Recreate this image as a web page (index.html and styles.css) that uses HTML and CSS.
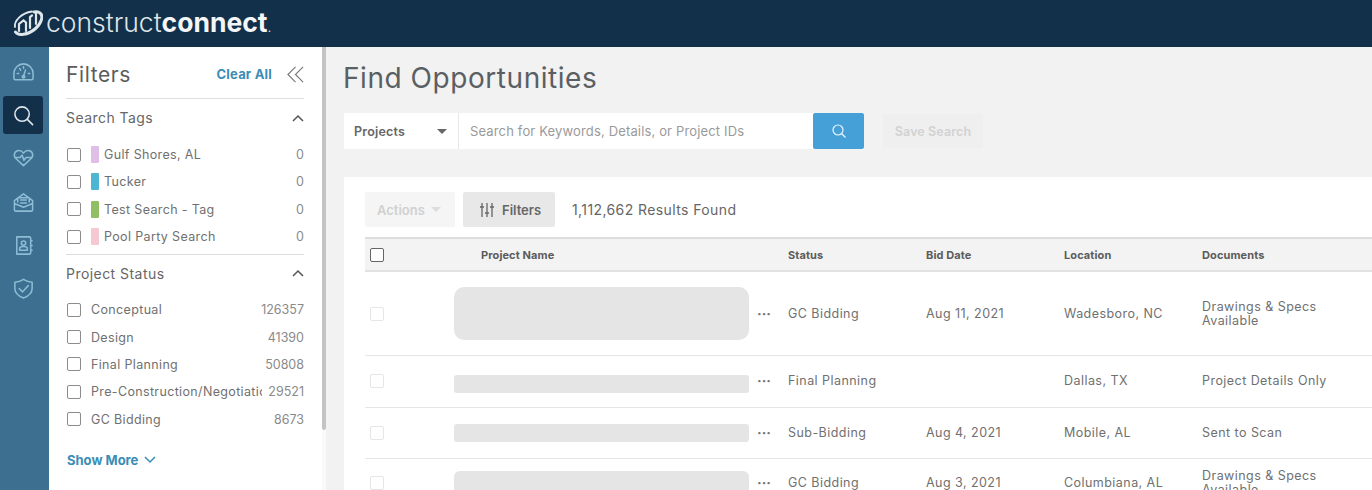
FILE: index.html
```html
<!DOCTYPE html>
<html>
<head>
    <title>Find Opportunities</title>
    <link rel="stylesheet" href="styles.css">
</head>
<body>
    <header class="topbar">
        <svg class="logo-mark" viewBox="0 0 30 26" width="30" height="26" fill="none" stroke="#dfe6ea" stroke-linecap="round">
            <path stroke-width="1.800" d="M2 17 C1 11 8 3 19 1.500" />
            <path stroke-width="3" d="M2.500 22 C5 26 15 25 22 19 C28 14 31 6 27 3 C25.500 1.500 23 1.500 21 2" />
            <path stroke-width="2.200" d="M6 21 V14 L10.500 10.500 L13 12.500 V21" />
            <path stroke-width="2.200" d="M17 18 V7 L19 5.500" />
            <path stroke-width="2.200" d="M23 14 V2" />
        </svg>
        <span class="logo-text">construct<b>connect</b><i>.</i></span>
    </header>
    <div class="body-wrap">
        <nav class="rail">
            <a class="rail-item">
                <svg viewBox="0 0 24 24" width="23" height="23"><path d="M2 18 V13 a10 10 0 0 1 20 0 V18 a1.500 1.500 0 0 1 -1.500 1.500 H3.500 A1.500 1.500 0 0 1 2 18 Z M12 16 L14 9.500 M5.500 13 H7 M17 13 H18.500 M8 8 L9 9.500 M12 6 V7.500" /><circle cx="12" cy="16.500" r="1.300" /></svg>
            </a>
            <a class="rail-item rail-active">
                <svg class="rail-search" viewBox="0 0 24 24" width="23" height="23"><circle cx="10.500" cy="10.500" r="7.500" /><path d="M16 16 L21.500 21.500" /></svg>
            </a>
            <a class="rail-item rail-heart">
                <svg viewBox="0 0 24 24" width="23" height="23"><path d="M12 20.500 L4 13 C1 10 2.500 5 7 4.800 C9.500 4.700 11 6 12 7.500 C13 6 14.500 4.700 17 4.800 C21.500 5 23 10 20 13 Z M3 12 H8.500 L10.500 9.500 L12.500 15 L14.500 12 H21" /></svg>
            </a>
            <a class="rail-item">
                <svg viewBox="0 0 24 24" width="23" height="23"><path d="M2.500 10 L12 3 L21.500 10 V19.500 a1.500 1.500 0 0 1 -1.500 1.500 H4 a1.500 1.500 0 0 1 -1.500 -1.500 Z M2.500 13 L12 17 L21.500 13 M6 11.500 V7 H18 V11.500 M9 9.500 H15 M9 12.500 H15" /></svg>
            </a>
            <a class="rail-item">
                <svg viewBox="0 0 24 24" width="23" height="23"><path d="M5 3 H18 a1.500 1.500 0 0 1 1.500 1.500 V19.500 A1.500 1.500 0 0 1 18 21 H5 Z M19.500 7 H21 M19.500 12 H21 M19.500 17 H21 M8 17 V15 C8 13.500 9.500 13 12 13 C14.500 13 16 13.500 16 15 V17 Z" /><circle cx="12" cy="9.500" r="2.300" /></svg>
            </a>
            <a class="rail-item">
                <svg viewBox="0 0 24 24" width="23" height="23"><path d="M12 2.500 C15 4.500 17.500 5.300 21 5.500 V12 C21 16.500 17 20 12 22 C7 20 3 16.500 3 12 V5.500 C6.500 5.300 9 4.500 12 2.500 Z M7.500 12 L11 15.500 L17 9" /></svg>
            </a>
        </nav>
        <aside class="filters">
            <div class="filters-head">
                <h2>Filters</h2>
                <a class="clear-all">Clear All</a>
                <svg class="collapse" viewBox="0 0 18 18" width="17" height="17"><path d="M9 1 L1 9 L9 17 M17 1 L9 9 L17 17" /></svg>
            </div>
            <div class="section-head">
                <h3>Search Tags</h3>
                <svg class="chev" viewBox="0 0 12 8" width="12" height="8"><path d="M1 7 L6 2 L11 7" /></svg>
            </div>
            <ul class="filter-list">
                <li><span class="box"></span><span class="swatch swatch-lilac"></span><span class="name">Gulf Shores, AL</span><span class="count">0</span></li>
                <li><span class="box"></span><span class="swatch swatch-cyan"></span><span class="name">Tucker</span><span class="count">0</span></li>
                <li><span class="box"></span><span class="swatch swatch-green"></span><span class="name">Test Search - Tag</span><span class="count">0</span></li>
                <li><span class="box"></span><span class="swatch swatch-pink"></span><span class="name">Pool Party Search</span><span class="count">0</span></li>
            </ul>
            <div class="section-head section-rule">
                <h3>Project Status</h3>
                <svg class="chev" viewBox="0 0 12 8" width="12" height="8"><path d="M1 7 L6 2 L11 7" /></svg>
            </div>
            <ul class="filter-list">
                <li><span class="box"></span><span class="name">Conceptual</span><span class="count">126357</span></li>
                <li><span class="box"></span><span class="name">Design</span><span class="count">41390</span></li>
                <li><span class="box"></span><span class="name">Final Planning</span><span class="count">50808</span></li>
                <li><span class="box"></span><span class="name">Pre-Construction/Negotiation</span><span class="count">29521</span></li>
                <li><span class="box"></span><span class="name">GC Bidding</span><span class="count">8673</span></li>
            </ul>
            <a class="show-more">Show More
                <svg viewBox="0 0 12 8" width="12" height="8"><path d="M1 1 L6 6 L11 1" /></svg>
            </a>
        </aside>
        <div class="scrollbar"><div class="scroll-thumb"></div></div>
        <main class="main">
            <h1>Find Opportunities</h1>
            <div class="search-row">
                <div class="search-bar">
                    <div class="search-type"><span>Projects</span><span class="caret"></span></div>
                    <div class="search-input">Search for Keywords, Details, or Project IDs</div>
                    <div class="search-btn">
                        <svg viewBox="0 0 16 16" width="16" height="16"><circle cx="7" cy="7" r="5" /><path d="M10.500 10.500 L14.500 14.500" /></svg>
                    </div>
                </div>
                <div class="save-search">Save Search</div>
            </div>
            <section class="card">
                <div class="toolbar">
                    <div class="btn btn-disabled">Actions<span class="caret caret-light"></span></div>
                    <div class="btn btn-filters">
                        <svg viewBox="0 0 16 16" width="16" height="16"><path d="M3 1 V15 M8 1 V15 M13 1 V15 M1 5 H5 M6 11 H10 M11 5 H15" /></svg>
                        Filters
                    </div>
                    <div class="results">1,112,662 Results Found</div>
                </div>
                <div class="row row-head">
                    <div class="cell-check"><span class="head-box"></span></div>
                    <div class="head-name">Project Name</div>
                    <div></div>
                    <div>Status</div>
                    <div>Bid Date</div>
                    <div>Location</div>
                    <div>Documents</div>
                </div>
                <div class="row row-tall">
                    <div class="cell-check"><span class="row-box"></span></div>
                    <div class="skeleton skeleton-big"></div>
                    <div class="dots">···</div>
                    <div>GC Bidding</div>
                    <div>Aug 11, 2021</div>
                    <div>Wadesboro, NC</div>
                    <div>Drawings &amp; Specs<br>Available</div>
                </div>
                <div class="row row-short">
                    <div class="cell-check"><span class="row-box"></span></div>
                    <div class="skeleton skeleton-low"></div>
                    <div class="dots">···</div>
                    <div>Final Planning</div>
                    <div></div>
                    <div>Dallas, TX</div>
                    <div>Project Details Only</div>
                </div>
                <div class="row row-short">
                    <div class="cell-check"><span class="row-box"></span></div>
                    <div class="skeleton"></div>
                    <div class="dots">···</div>
                    <div>Sub-Bidding</div>
                    <div>Aug 4, 2021</div>
                    <div>Mobile, AL</div>
                    <div>Sent to Scan</div>
                </div>
                <div class="row row-last">
                    <div class="cell-check"><span class="row-box"></span></div>
                    <div class="skeleton skeleton-last"></div>
                    <div class="dots">···</div>
                    <div>GC Bidding</div>
                    <div>Aug 3, 2021</div>
                    <div>Columbiana, AL</div>
                    <div>Drawings &amp; Specs<br>Available</div>
                </div>
            </section>
        </main>
    </div>
</body>
</html>
```

FILE: styles.css
```css
*
{
	box-sizing: border-box;
}

html, body
{
	height: 100%;
	margin: 0;
	overflow: hidden;
}

body
{
	display: flex;
	flex-direction: column;
	font-family: "Inter", "Liberation Sans", sans-serif;
	color: #666;
	background-color: #f2f2f2;
}

h1, h2, h3
{
	margin: 0;
	font-weight: 400;
}

ul
{
	list-style: none;
	margin: 0;
	padding: 0;
}

.topbar
{
	flex: none;
	height: 47px;
	display: flex;
	align-items: center;
	padding: 0 0 3px 13px;
	background-color: #12304a;
	color: #dfe6ea;
}

.logo-mark
{
	flex: none;
	margin-top: 2px;
}

.logo-text
{
	margin-left: 3px;
	font-size: 26.500px;
	font-weight: 300;
	letter-spacing: 0;
}

.logo-text b
{
	font-weight: 700;
	color: #f4f6f7;
}

.logo-text i
{
	font-size: 14px;
	font-style: normal;
}

.body-wrap
{
	flex: 1;
	display: flex;
	min-height: 0;
}

.rail
{
	flex: none;
	width: 49px;
	padding: 4px 0 0 3px;
	display: flex;
	flex-direction: column;
	background-color: #3d6f90;
}

.rail-item
{
	width: 40px;
	height: 43px;
	display: flex;
	align-items: center;
	justify-content: center;
	border-radius: 3px;
}

.rail-item svg
{
	fill: none;
	stroke: #8dbcd4;
	stroke-width: 1.600;
	stroke-linejoin: round;
	stroke-linecap: round;
}

.rail-item.rail-active
{
	height: 38px;
	margin: 2px 0 2px;
	background-color: #12304a;
}

.rail-heart
{
	margin-bottom: 2px;
}

.rail-item svg.rail-search
{
	stroke: #dfe6ea;
}

.filters
{
	flex: none;
	width: 273px;
	padding: 0 18px 0 17px;
	background-color: #fff;
}

.filters-head
{
	height: 52px;
	display: flex;
	align-items: center;
	border-bottom: 1px solid #ddd;
	padding-top: 3px;
}

.filters-head h2
{
	flex: 1;
	font-size: 21px;
	letter-spacing: 0.600px;
	color: #5c5c5c;
}

.clear-all
{
	font-size: 13px;
	font-weight: 700;
	letter-spacing: 0.200px;
	color: #3a8db5;
}

.collapse
{
	margin-left: 15px;
	fill: none;
	stroke: #777;
	stroke-width: 1.200;
}

.section-head
{
	height: 37px;
	display: flex;
	align-items: center;
	justify-content: space-between;
}

.section-head h3
{
	font-size: 14px;
	letter-spacing: 0.450px;
	color: #666;
}

.section-rule
{
	height: 37px;
	margin-top: 4px;
	border-top: 1px solid #ddd;
}

.chev
{
	fill: none;
	stroke: #555;
	stroke-width: 1.500;
}

.filter-list
{
	padding-top: 5px;
}

.filter-list li
{
	height: 27.300px;
	display: flex;
	align-items: center;
	font-size: 12.500px;
}

.box
{
	flex: none;
	width: 14px;
	height: 14px;
	margin: 0 10px 0 1px;
	border: 1.500px solid #8c8c8c;
	border-radius: 2px;
	background-color: #fff;
}

.swatch
{
	flex: none;
	width: 8px;
	height: 17px;
	margin: 0 5px 0 0;
	border-radius: 1px;
}

.swatch-lilac
{
	background-color: #e0bfe6;
}

.swatch-cyan
{
	background-color: #4db6d3;
}

.swatch-green
{
	background-color: #92bf66;
}

.swatch-pink
{
	background-color: #f6c9d2;
}

.name
{
	flex: 1;
	min-width: 0;
	overflow: hidden;
	white-space: nowrap;
	letter-spacing: 0.350px;
	color: #707070;
}

.count
{
	flex: none;
	padding-left: 6px;
	color: #8a8a8a;
}

.show-more
{
	display: flex;
	align-items: center;
	gap: 6px;
	margin: 19px 0 0 1px;
	font-size: 13px;
	font-weight: 700;
	color: #3a8db5;
}

.show-more svg
{
	fill: none;
	stroke: #3a8db5;
	stroke-width: 1.500;
}

.scrollbar
{
	flex: none;
	width: 4px;
	background-color: #fafafa;
}

.scroll-thumb
{
	height: 383px;
	border-radius: 0 0 2px 2px;
	background-color: #c4c4c4;
}

.main
{
	flex: 1;
	min-width: 0;
	padding-left: 18px;
	background-color: #f2f2f2;
}

.main h1
{
	margin: 14px 0 0 -1px;
	height: 38px;
	font-size: 28px;
	line-height: 34px;
	letter-spacing: 0.550px;
	color: #5a5f63;
}

.search-row
{
	display: flex;
	align-items: center;
	margin-top: 14px;
}

.search-bar
{
	width: 520px;
	height: 36px;
	display: flex;
	background-color: #fff;
}

.search-type
{
	flex: none;
	width: 115px;
	display: flex;
	align-items: center;
	justify-content: space-between;
	padding: 0 11px 0 10px;
	border-right: 1px solid #e8e8e8;
	font-size: 12.500px;
	font-weight: 600;
	letter-spacing: 0.200px;
	color: #666;
}

.caret
{
	width: 0;
	height: 0;
	border-left: 5px solid transparent;
	border-right: 5px solid transparent;
	border-top: 5px solid #666;
}

.caret-light
{
	margin-left: 6px;
	border-top-color: #ddd;
}

.search-input
{
	flex: 1;
	display: flex;
	align-items: center;
	padding-left: 11px;
	font-size: 13px;
	letter-spacing: 0.150px;
	color: #9a9a9a;
}

.search-btn
{
	flex: none;
	width: 51px;
	display: flex;
	align-items: center;
	justify-content: center;
	border-radius: 2px;
	background-color: #45a0d8;
}

.search-btn svg
{
	fill: none;
	stroke: #e8f4fb;
	stroke-width: 1.200;
}

.save-search
{
	height: 34px;
	width: 100px;
	margin-left: 19px;
	display: flex;
	align-items: center;
	justify-content: center;
	font-size: 12.500px;
	font-weight: 600;
	letter-spacing: 0.100px;
	color: #d2d2d2;
	background-color: #efefef;
}

.card
{
	margin-top: 28px;
	padding: 15px 0 0 21px;
	background-color: #fff;
}

.toolbar
{
	display: flex;
	align-items: center;
	height: 35px;
}

.btn
{
	height: 35px;
	display: flex;
	align-items: center;
	border-radius: 2px;
	font-size: 13px;
	font-weight: 600;
}

.btn-disabled
{
	width: 90px;
	padding-left: 12px;
	color: #d0d0d0;
	background-color: #f5f5f5;
}

.btn-filters
{
	width: 92px;
	margin-left: 8px;
	padding-left: 16px;
	gap: 7px;
	color: #666;
	background-color: #e8e8e8;
}

.btn-filters svg
{
	fill: none;
	stroke: #666;
	stroke-width: 1.300;
}

.results
{
	margin-left: 17px;
	font-size: 14px;
	letter-spacing: 0.400px;
	color: #666;
}

.row
{
	display: grid;
	grid-template-columns: 89px 295px 39px 138px 138px 138px 1fr;
	align-items: center;
	border-bottom: 1px solid #e6e6e6;
	font-size: 12.500px;
	line-height: 14px;
	letter-spacing: 0.450px;
	color: #707070;
}

.row-head
{
	height: 35px;
	margin-top: 10px;
	border-top: 2px solid #ddd;
	border-bottom: 2px solid #e2e2e2;
	font-size: 11px;
	font-weight: 700;
	letter-spacing: 0.100px;
	color: #5c5c5c;
	background-color: #f3f3f3;
}

.head-name
{
	padding-left: 27px;
}

.row-tall
{
	height: 84px;
}

.row-short
{
	height: 51.500px;
}

.row-last
{
	height: 49px;
}

.cell-check
{
	padding-left: 5px;
	display: flex;
}

.head-box
{
	width: 14px;
	height: 14px;
	border: 1.500px solid #666;
	border-radius: 2px;
	background-color: #fff;
}

.row-box
{
	width: 14px;
	height: 14px;
	border: 1.500px solid #e6e6e6;
	border-radius: 2px;
}

.skeleton
{
	height: 18px;
	border-radius: 3px;
	background-color: #e5e5e5;
}

.skeleton-big
{
	height: 53px;
	border-radius: 10px;
}

.skeleton-low
{
	margin-top: 6px;
}

.skeleton-last
{
	height: 24px;
	border-radius: 6px;
}

.dots
{
	padding-left: 8px;
	font-size: 14px;
	font-weight: 700;
	letter-spacing: 0;
	color: #777;
}
```
